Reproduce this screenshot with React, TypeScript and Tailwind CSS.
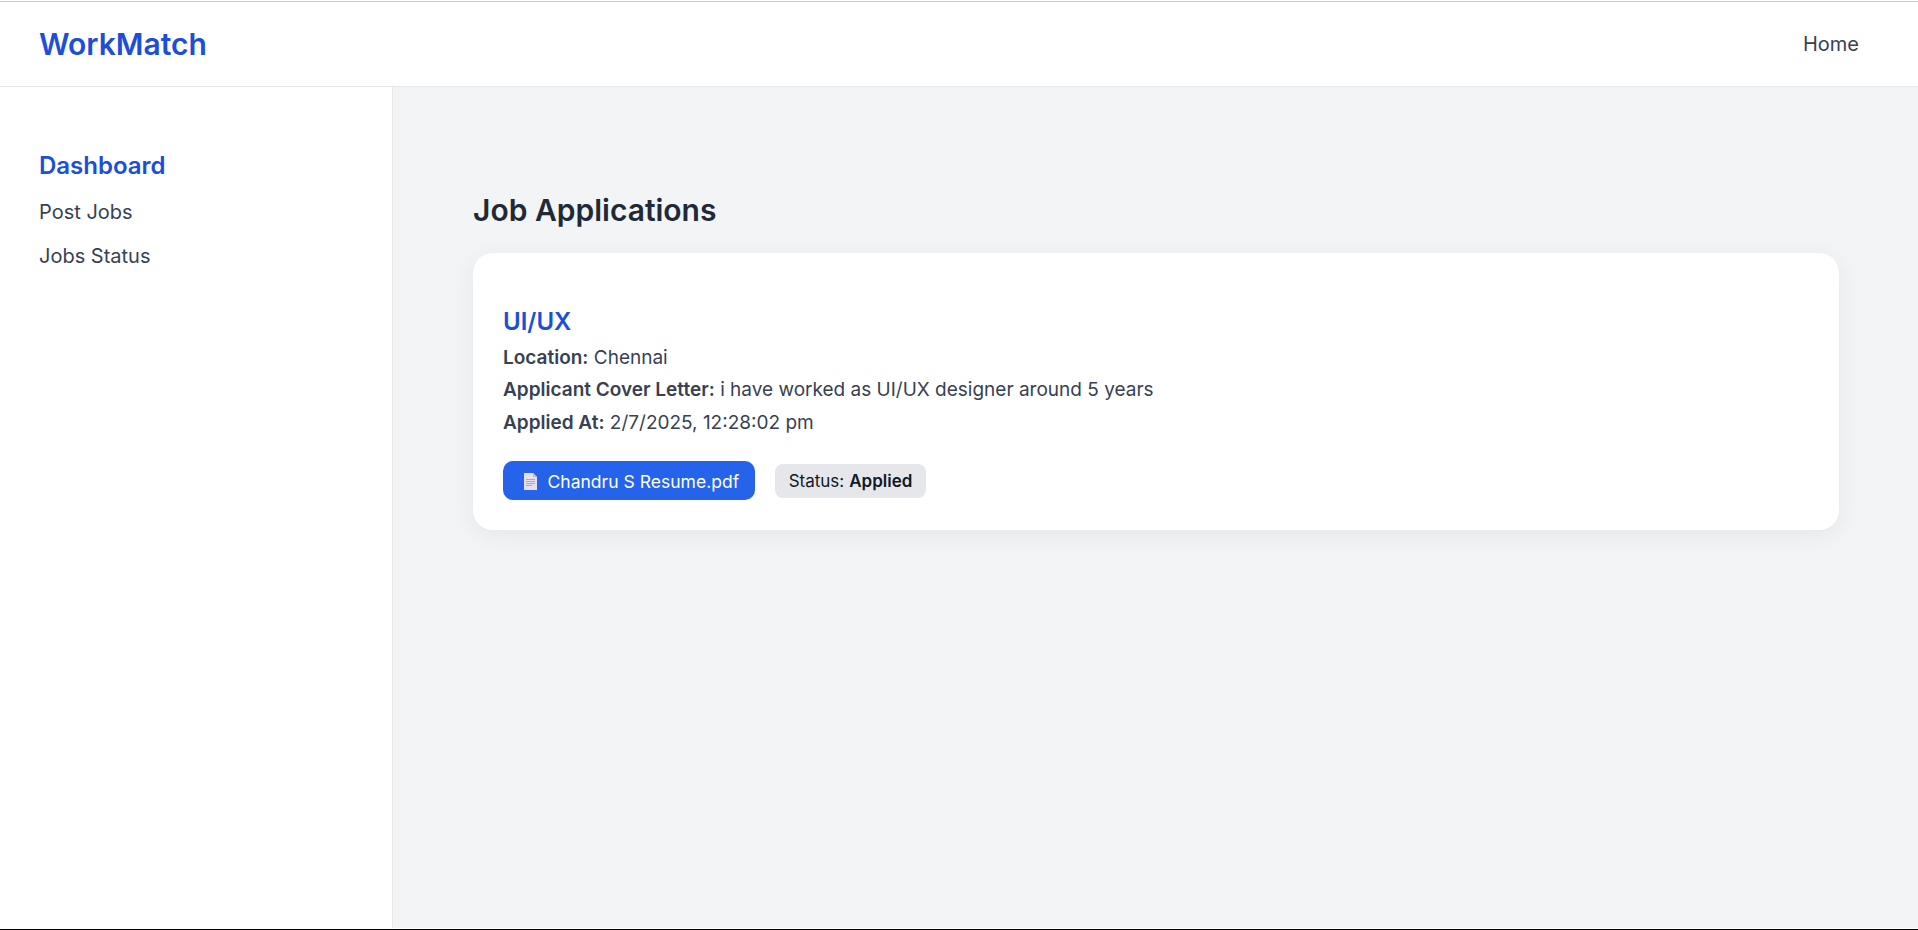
const details = [
  { label: "Location:", value: "Chennai" },
  { label: "Applicant Cover Letter:", value: "i have worked as UI/UX designer around 5 years" },
  { label: "Applied At:", value: "2/7/2025, 12:28:02 pm" },
];

function DocumentIcon() {
  return (
    <svg className="h-[17px] w-[13px] shrink-0" viewBox="0 0 13 17" fill="none">
      <path d="M0 0H9L13 4V17H0Z" fill="#e7dff0" />
      <path d="M9 0V4H13Z" fill="#c4b8d2" />
      <path d="M2 6.5H11M2 8.5H11M2 10.5H11M2 12.5H8" stroke="#b0a4c2" />
    </svg>
  );
}

function Header() {
  return (
    <header className="flex h-[86px] shrink-0 items-center justify-between border-t border-b border-t-[#c8cacc] border-b-gray-200 bg-white pr-[59px] pl-[39px]">
      <a className="text-[30px] leading-10 font-semibold text-[#1d4ed8]">WorkMatch</a>
      <a className="text-xl text-[#374151]">Home</a>
    </header>
  );
}

function Sidebar() {
  return (
    <aside className="w-[393px] shrink-0 border-r border-[#e5e7eb] bg-white px-[39px] pt-[60px]">
      <h2 className="text-2xl leading-[38px] font-semibold text-[#1d4ed8]">Dashboard</h2>
      <nav className="mt-3 flex flex-col gap-3.5 text-xl leading-[30px] text-[#374151]">
        <a>Post Jobs</a>
        <a>Jobs Status</a>
      </nav>
    </aside>
  );
}

export default function App() {
  return (
    <div className="flex h-[930px] flex-col overflow-hidden border-b border-black bg-white pt-px font-['Inter',sans-serif]">
      <Header />
      <div className="mb-px flex min-h-0 flex-1">
        <Sidebar />
        <main className="flex-1 bg-[#f3f4f6] pt-[100px] pr-[79px] pl-20">
          <h1 className="text-[30px] leading-[46px] font-semibold text-[#1f2937]">Job Applications</h1>
          <section className="mt-5 h-[277px] rounded-[20px] bg-white px-[30px] pt-[50px] shadow-[0_5px_25px_rgba(0,0,0,0.06)]">
            <h3 className="text-2xl leading-[37px] font-semibold text-[#1d4ed8]">UI/UX</h3>
            <div className="mt-[1.9px] text-[19px] leading-[32.4px] text-[#374151]">
              {details.map((d) => (
                <p key={d.label}>
                  <strong className="font-semibold">{d.label}</strong> {d.value}
                </p>
              ))}
            </div>
            <div className="mt-[21.9px] flex items-start gap-5">
              <a className="flex h-[39px] w-[252px] items-center gap-[10.5px] rounded-[10px] bg-[#2563eb] pt-0.5 pl-[21px] text-[17.55px] whitespace-nowrap text-white">
                <DocumentIcon />
                <span className="pt-px">Chandru S Resume.pdf</span>
              </a>
              <span className="mt-[3px] flex h-[34px] w-[151px] items-center justify-center gap-[5px] rounded-[8px] bg-[#e5e7eb] pt-0.5 text-[17px] whitespace-nowrap text-[#111827]">
                Status: <strong className="font-semibold">Applied</strong>
              </span>
            </div>
          </section>
        </main>
      </div>
    </div>
  );
}
